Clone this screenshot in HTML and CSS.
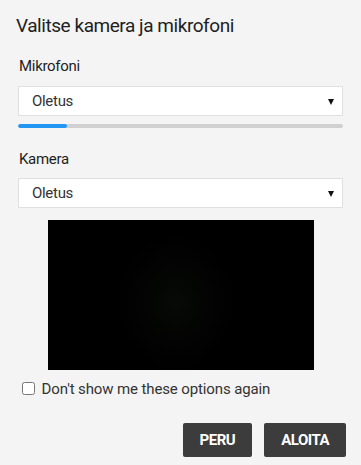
FILE: index.html
```html
<!DOCTYPE html>
<html lang="fi">
<head>
<meta charset="utf-8">
<title>Valitse kamera ja mikrofoni</title>
<link rel="stylesheet" href="styles.css">
</head>
<body>
<div class="dialog">
  <h1 class="title">Valitse kamera ja mikrofoni</h1>
  <div class="content">
    <div class="field">
      <label class="label">Mikrofoni</label>
      <div class="select"><span>Oletus</span></div>
      <div class="meter"><div class="meter-fill" style="width: 49px"></div></div>
    </div>
    <div class="field field-camera">
      <label class="label">Kamera</label>
      <div class="select"><span>Oletus</span></div>
      <div class="video"></div>
    </div>
    <label class="check-row"><input type="checkbox" class="check"> Don't show me these options again</label>
  </div>
  <div class="footer">
    <button class="btn">PERU</button>
    <button class="btn">ALOITA</button>
  </div>
</div>
</body>
</html>
```

FILE: styles.css
```css
html, body {
  margin: 0;
  padding: 0;
  background: #f4f4f4;
}
body {
  font-family: Roboto, "Liberation Sans", sans-serif;
  color: #222;
  width: 361px;
  height: 465px;
  overflow: hidden;
}
.dialog {
  display: flex;
  flex-direction: column;
}
.title {
  margin: 0;
  padding: 14px 16px 0;
  font-size: 19px;
  line-height: 24px;
  font-weight: 400;
  letter-spacing: -0.45px;
  color: #1e1e1e;
}
.content {
  padding: 19px 18px 0;
  display: flex;
  flex-direction: column;
}
.field {
  display: flex;
  flex-direction: column;
}
.field-camera {
  margin-top: 22px;
}
.label {
  font-size: 15px;
  line-height: 18px;
  font-weight: 400;
  letter-spacing: -0.3px;
  color: #1e1e1e;
  margin: 0 0 11px 1px;
}
.field-camera .label {
  margin-bottom: 10px;
}
.select {
  position: relative;
  height: 30px;
  box-sizing: border-box;
  background: #fff;
  border: 1px solid #e0e0e0;
  font-size: 15px;
  line-height: 28px;
  letter-spacing: -0.3px;
  color: #333;
  padding-left: 13px;
}
.select::after {
  content: "";
  position: absolute;
  right: 8px;
  top: 12px;
  border-left: 3px solid transparent;
  border-right: 3px solid transparent;
  border-top: 6px solid #111;
}
.meter {
  margin-top: 8px;
  height: 4px;
  border-radius: 2px;
  background: #d0d0d0;
  overflow: hidden;
}
.meter-fill {
  height: 100%;
  background: #2196f3;
  border-radius: 2px;
}
.video {
  align-self: center;
  width: 266px;
  height: 150px;
  margin-top: 12px;
  background: radial-gradient(ellipse 60px 70px at 48% 55%, #070a06 0%, #020302 60%, #000 100%);
}
.check-row {
  margin-top: 9px;
  font-size: 15px;
  line-height: 20px;
  letter-spacing: -0.12px;
  color: #333;
  display: block;
}
.check {
  margin: 3px 3px 3px 4px;
  width: 13px;
  height: 13px;
  vertical-align: -1px;
}
.footer {
  display: flex;
  justify-content: flex-end;
  gap: 12px;
  padding: 24px 15px 0;
}
.btn {
  height: 34px;
  padding: 0 17px;
  border: none;
  border-radius: 2px;
  background: #3c3c3c;
  color: #fff;
  font-family: Roboto, "Liberation Sans", sans-serif;
  font-size: 15px;
  font-weight: 700;
  letter-spacing: -0.5px;
}
```
